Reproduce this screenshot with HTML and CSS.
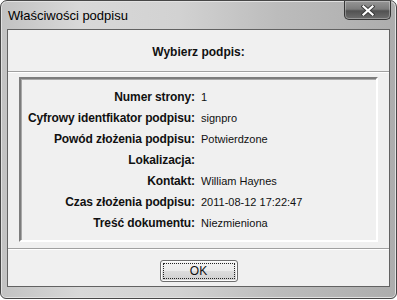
FILE: index.html
```html
<!DOCTYPE html>
<html lang="pl">
<head>
<meta charset="utf-8">
<title>Właściwości podpisu</title>
<link rel="stylesheet" href="styles.css">
</head>
<body>
<div class="window">
  <div class="titlebar">
    <span class="title">Właściwości podpisu</span>
    <button class="close" aria-label="Zamknij">
      <svg width="14" height="11" viewBox="0 0 14 11"><path d="M2.5 1.5 L11.5 9.5 M11.5 1.5 L2.5 9.5" stroke="#3a3a3a" stroke-width="4" stroke-linecap="square"/><path d="M2.5 1.5 L11.5 9.5 M11.5 1.5 L2.5 9.5" stroke="#fff" stroke-width="2.2" stroke-linecap="square"/></svg>
    </button>
  </div>
  <div class="client">
    <div class="header">Wybierz podpis:</div>
    <div class="content">
      <div class="group">
        <div class="props">
          <div class="label">Numer strony:</div><div class="value">1</div>
          <div class="label">Cyfrowy identfikator podpisu:</div><div class="value">signpro</div>
          <div class="label">Powód złożenia podpisu:</div><div class="value">Potwierdzone</div>
          <div class="label">Lokalizacja:</div><div class="value"></div>
          <div class="label">Kontakt:</div><div class="value">William Haynes</div>
          <div class="label">Czas złożenia podpisu:</div><div class="value">2011-08-12 17:22:47</div>
          <div class="label">Treść dokumentu:</div><div class="value">Niezmieniona</div>
        </div>
      </div>
    </div>
    <div class="footer">
      <button class="ok"><span class="focus">OK</span></button>
    </div>
  </div>
</div>
</body>
</html>
```
FILE: styles.css
```css
html, body {
  margin: 0;
  padding: 0;
  background: #ffffff;
}
body {
  font-family: "Liberation Sans", Arial, sans-serif;
  color: #111;
}
.window {
  box-sizing: border-box;
  width: 397px;
  height: 299px;
  border: 1px solid #474747;
  border-radius: 7px 7px 6px 6px;
  padding: 0 6px 11px 6px;
  display: flex;
  flex-direction: column;
  background:
    linear-gradient(to right, #c2c2c2 0%, #d8d8d8 20%, #d2d2d2 45%, #bcbcbc 70%, #adadad 100%);
  box-shadow: inset 0 0 0 1px #e2e2e2;
}
.titlebar {
  height: 28px;
  display: flex;
  align-items: flex-start;
  flex: none;
}
.title {
  font-size: 13px;
  color: #000;
  margin: 7px 0 0 1px;
  line-height: 15px;
}
.close {
  margin-left: auto;
  margin-right: -1px;
  width: 47px;
  height: 19px;
  padding: 0;
  border: 1px solid #363636;
  border-top: none;
  border-radius: 0 0 5px 5px;
  background: linear-gradient(to bottom, #969696 0%, #7c7c7c 45%, #525252 55%, #6e6e6e 100%);
  box-shadow: inset 0 0 0 1px rgba(255,255,255,0.3);
  display: flex;
  align-items: center;
  justify-content: center;
}
.close svg { display: block; }
.client {
  flex: 1;
  border: 1px solid #626262;
  background: #f0f0f0;
  display: flex;
  flex-direction: column;
}
.header {
  box-sizing: border-box;
  height: 42px;
  border-bottom: 1px solid #a0a0a0;
  display: flex;
  align-items: center;
  justify-content: center;
  font-weight: bold;
  font-size: 12px;
  padding-top: 2px;
  color: #111;
}
.content {
  border-top: 1px solid #ffffff;
  padding: 4px 11px 6px 11px;
}
.group {
  border: 2px solid;
  border-color: #7c7c7c #ffffff #ffffff #7c7c7c;
  box-shadow: inset 1px 1px 0 #a8a8a8;
  padding: 7px 0;
}
.props {
  display: grid;
  grid-template-columns: 174px 1fr;
  grid-auto-rows: 21px;
  column-gap: 6px;
  align-items: center;
}
.label {
  text-align: right;
  font-weight: bold;
  font-size: 12px;
  color: #111;
  white-space: nowrap;
  letter-spacing: -0.1px;
}
.value {
  font-size: 11px;
  color: #111;
  white-space: nowrap;
  padding-top: 1px;
}
.footer {
  flex: 1;
  border-top: 1px solid #a0a0a0;
  box-shadow: inset 0 1px 0 #ffffff;
  display: flex;
  justify-content: center;
  align-items: flex-start;
  padding-top: 11px;
}
.ok {
  box-sizing: border-box;
  width: 78px;
  height: 22px;
  padding: 2px;
  border: 1px solid #6e6e6e;
  border-radius: 3px;
  background: linear-gradient(to bottom, #f4f4f4 0%, #ebebeb 48%, #dcdcdc 52%, #cfcfcf 100%);
  box-shadow: inset 0 0 0 1px #fcfcfc;
  font-family: "Liberation Sans", Arial, sans-serif;
  font-size: 12px;
  color: #111;
  display: flex;
}
.focus {
  flex: 1;
  border: 1px dotted #222;
  display: flex;
  align-items: center;
  justify-content: center;
}
```
